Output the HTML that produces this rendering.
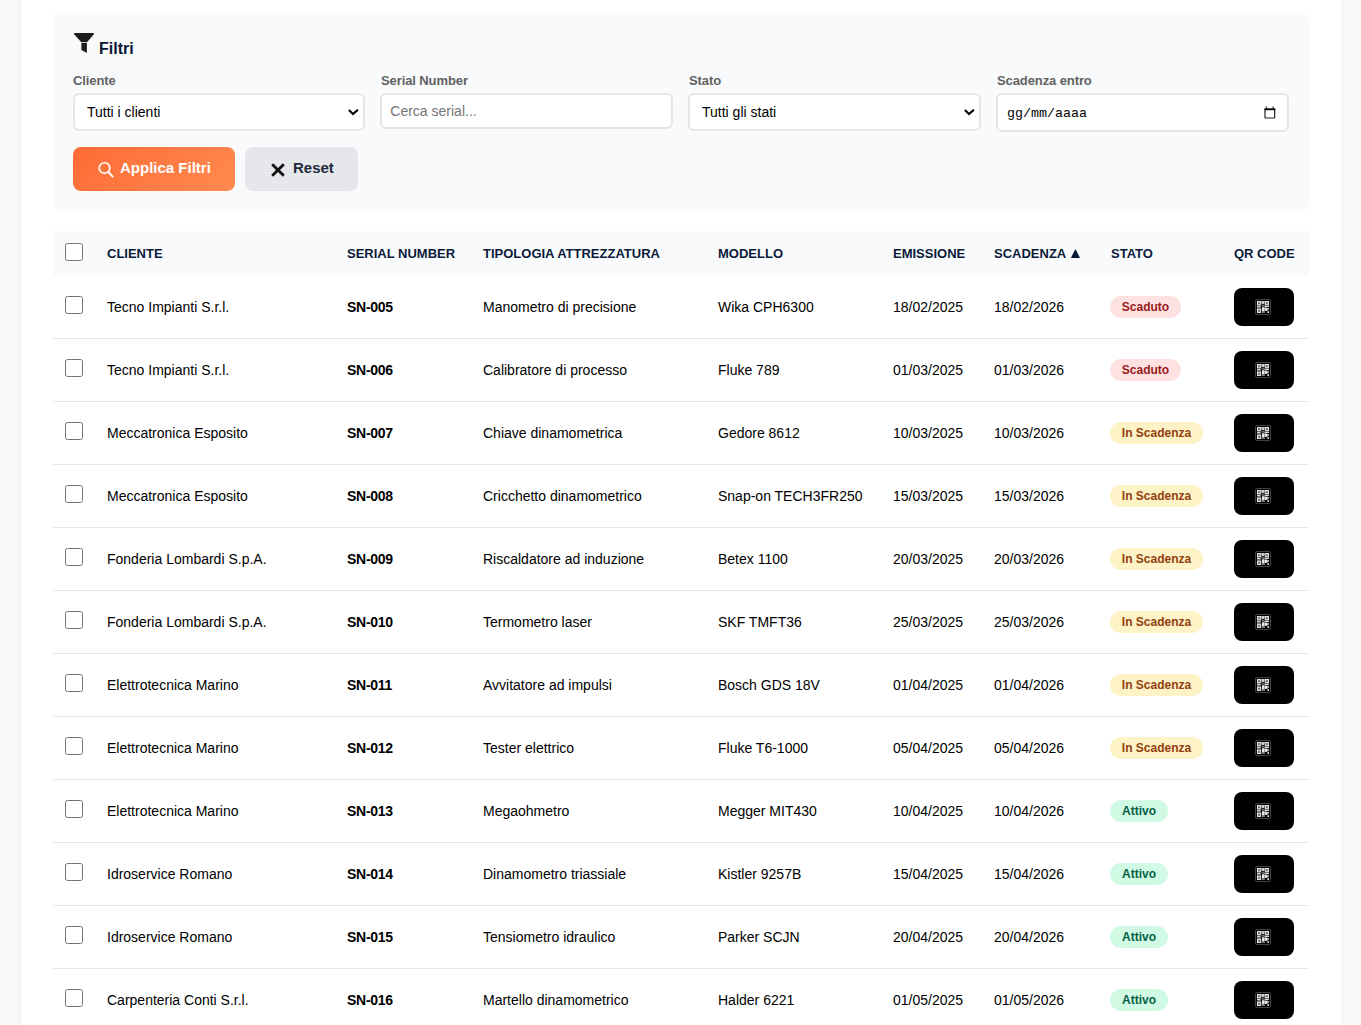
<!DOCTYPE html>
<html><head><meta charset="utf-8">
<style>
*{box-sizing:border-box;margin:0;padding:0}
html,body{width:1361px;height:1025px;overflow:hidden}
body{background:#f8fafc;font-family:"Liberation Sans",sans-serif;color:#111;position:relative}
.wrap{position:absolute;left:21px;top:-20px;width:1320px;height:1100px;background:#fff;box-shadow:0 0 6px rgba(0,0,0,0.06)}
.panel{position:absolute;left:53px;top:12px;width:1256px;height:199px;background:#f8fafc;border-radius:8px}
.ic{position:absolute;display:block}
.title{position:absolute;left:99px;top:41px;font-size:16px;font-weight:700;color:#0b1533;line-height:16px;white-space:nowrap}
.lbl{position:absolute;top:73px;font-size:13px;font-weight:700;color:#626262;letter-spacing:-0.1px;line-height:16px;white-space:nowrap}
.ctl{position:absolute;top:93px;height:38px;width:292.75px;background:#fff;border:2px solid #e3e5e9;border-radius:6px;font-size:14px;line-height:16px;color:#000}
.ctl span{position:absolute;left:12px;top:9px;white-space:nowrap}
.btn{position:absolute;top:147px;height:44px;border-radius:8px}
.orange{left:73px;width:162px;background:linear-gradient(135deg,#ff6b35,#ff8a50)}
.gray{left:245px;width:113px;background:#e5e7eb}
.btn span{position:absolute;top:12px;font-size:15px;font-weight:700;line-height:17px;white-space:nowrap}
.thead{position:absolute;left:53px;top:231px;width:1256px;height:45px;background:#f8fafc}
.th{position:absolute;top:246px;font-size:13px;font-weight:700;color:#0b1a3a;line-height:15px;white-space:nowrap}
.cb{position:absolute;left:65px;width:18px;height:18px;border:1.5px solid #767676;border-radius:2.5px;background:#fff}
.row{position:absolute;left:53px;width:1256px;height:1px;background:#e5e7eb}
.td{position:absolute;font-size:14px;line-height:16px;color:#000;white-space:nowrap}
.b{font-weight:700;letter-spacing:-0.27px}
.badge{position:absolute;height:22px;border-radius:11px;font-size:12px;font-weight:700;line-height:22px;text-align:center;white-space:nowrap}
.red{background:#fee2e2;color:#991b1b}
.yel{background:#fef3c7;color:#92400e}
.grn{background:#d1fae5;color:#065f46}
.qr{position:absolute;left:1234px;width:60px;height:38px;background:#000;border-radius:8px}
.qr svg{position:absolute;left:21px;top:11px}
</style></head><body>
<div class="wrap"></div>
<div class="panel"></div>
<svg class="ic" style="left:72px;top:31px" width="24" height="24" viewBox="72 31 24 24">
<path d="M74.8 33 H93.2 Q94.4 33.2 93.8 34.3 L87 42.2 H81.3 L74.2 34.3 Q73.6 33.2 74.8 33Z" fill="#1c1c1c"/>
<path d="M81.4 43.1 H86.9 V53 L81.4 50Z" fill="#1c1c1c"/>
</svg>
<div class="title">Filtri</div>
<div class="lbl" style="left:73px">Cliente</div>
<div class="lbl" style="left:381px">Serial Number</div>
<div class="lbl" style="left:689px">Stato</div>
<div class="lbl" style="left:997px">Scadenza entro</div>
<div class="ctl" style="left:73px;width:292px"><span>Tutti i clienti</span></div>
<div class="ctl" style="left:380px;width:293px;height:35.5px"><span style="color:#757575;left:8.3px;top:7.5px">Cerca serial...</span></div>
<div class="ctl" style="left:688px;width:293px"><span>Tutti gli stati</span></div>
<div class="ctl" style="left:996px;width:293px;height:38.67px"><span style="font-family:'Liberation Mono',monospace;font-size:13.33px;left:9px;top:10.5px">gg/mm/aaaa</span></div>
<svg class="ic" style="left:340px;top:100px" width="30" height="24" viewBox="340 100 30 24"><path d="M348.9 110.1 L353 114 L357.9 109.8" fill="none" stroke="#000" stroke-width="2.1"/></svg>
<svg class="ic" style="left:956px;top:100px" width="30" height="24" viewBox="956 100 30 24"><path d="M964.9 110.1 L969 114 L973.9 109.8" fill="none" stroke="#000" stroke-width="2.1"/></svg>
<svg class="ic" style="left:1258px;top:102px" width="24" height="22" viewBox="1258 102 24 22">
<path d="M1264.3 108.3 H1275.4 V110.2 H1264.3Z" fill="#000"/>
<path d="M1265 110 V117.6 Q1265 118 1265.5 118 H1274.2 Q1274.7 118 1274.7 117.5 V110" fill="none" stroke="#222" stroke-width="1.2"/>
<path d="M1266.3 106.5 V108.5 M1273.1 106.5 V108.5" stroke="#000" stroke-width="1"/>
</svg>
<div class="btn orange"><span style="left:47px;color:#fff">Applica Filtri</span></div>
<svg class="ic" style="left:94px;top:158px" width="24" height="24" viewBox="94 158 24 24"><circle cx="104.5" cy="168" r="5.3" fill="none" stroke="#fff" stroke-width="1.65"/><path d="M108.5 172 L112.6 176.6" stroke="#fff" stroke-width="2" stroke-linecap="round"/></svg>
<div class="btn gray"><span style="left:48px;color:#1e293b">Reset</span></div>
<svg class="ic" style="left:266px;top:158px" width="24" height="24" viewBox="266 158 24 24"><path d="M272.2 164.2 L283.8 175.8 M283.8 164.2 L272.2 175.8" stroke="#111" stroke-width="2.8"/></svg>
<div class="thead"></div>
<div class="cb" style="top:243px"></div>
<div class="th" style="left:107px">CLIENTE</div>
<div class="th" style="left:347px">SERIAL NUMBER</div>
<div class="th" style="left:483px">TIPOLOGIA ATTREZZATURA</div>
<div class="th" style="left:718px">MODELLO</div>
<div class="th" style="left:893px">EMISSIONE</div>
<div class="th" style="left:994px">SCADENZA</div>
<div class="th" style="left:1111px">STATO</div>
<div class="th" style="left:1234px">QR CODE</div>
<svg class="ic" style="left:1070px;top:248px" width="11" height="11" viewBox="1070 248 11 11"><path d="M1070.9 257.9 L1075.45 248.9 L1080 257.9Z" fill="#0b1a3a"/></svg>
<div class="cb" style="top:296px"></div>
<div class="td" style="left:107px;top:299px">Tecno Impianti S.r.l.</div>
<div class="td b" style="left:347px;top:299px">SN-005</div>
<div class="td" style="left:483px;top:299px">Manometro di precisione</div>
<div class="td" style="left:718px;top:299px">Wika CPH6300</div>
<div class="td" style="left:893px;top:299px">18/02/2025</div>
<div class="td" style="left:994px;top:299px">18/02/2026</div>
<div class="badge red" style="left:1110px;top:296px;width:71px">Scaduto</div>
<div class="qr" style="top:288px"><svg width="16" height="16" viewBox="0 0 16 16"><rect x="0.5" y="0.5" width="15" height="15" rx="1.5" fill="none" stroke="#404040" stroke-width="1"/><rect x="2.5" y="2.5" width="3.2" height="3.2" fill="#7a7a7a" stroke="#e2e2e2" stroke-width="1.05"/><rect x="10.3" y="2.5" width="3.2" height="3.2" fill="#7a7a7a" stroke="#e2e2e2" stroke-width="1.05"/><rect x="2.5" y="10.3" width="3.2" height="3.2" fill="#7a7a7a" stroke="#e2e2e2" stroke-width="1.05"/><path d="M6.4 2 H9.6 V4.2 L8 5.6 L6.4 4.2Z" fill="#cfcfcf"/><rect x="2" y="6.6" width="3.6" height="1.6" fill="#d6d6d6"/><rect x="6.6" y="6.4" width="2.8" height="1" fill="#bbb"/><rect x="9.6" y="6.6" width="4.4" height="1.4" fill="#d6d6d6"/><rect x="2" y="8.4" width="4" height="1.4" fill="#9a9a9a"/><rect x="7" y="8.2" width="2.6" height="4.4" fill="#e6e6e6"/><rect x="9.8" y="8.6" width="2.8" height="3.2" fill="#f0f0f0"/><rect x="12.4" y="12.2" width="1.6" height="1.8" fill="#e0e0e0"/><rect x="7" y="12.8" width="3" height="1.2" fill="#777"/><rect x="12.6" y="9" width="1.4" height="2" fill="#aaa"/></svg></div>
<div class="row" style="top:338px"></div>
<div class="cb" style="top:359px"></div>
<div class="td" style="left:107px;top:362px">Tecno Impianti S.r.l.</div>
<div class="td b" style="left:347px;top:362px">SN-006</div>
<div class="td" style="left:483px;top:362px">Calibratore di processo</div>
<div class="td" style="left:718px;top:362px">Fluke 789</div>
<div class="td" style="left:893px;top:362px">01/03/2025</div>
<div class="td" style="left:994px;top:362px">01/03/2026</div>
<div class="badge red" style="left:1110px;top:359px;width:71px">Scaduto</div>
<div class="qr" style="top:351px"><svg width="16" height="16" viewBox="0 0 16 16"><rect x="0.5" y="0.5" width="15" height="15" rx="1.5" fill="none" stroke="#404040" stroke-width="1"/><rect x="2.5" y="2.5" width="3.2" height="3.2" fill="#7a7a7a" stroke="#e2e2e2" stroke-width="1.05"/><rect x="10.3" y="2.5" width="3.2" height="3.2" fill="#7a7a7a" stroke="#e2e2e2" stroke-width="1.05"/><rect x="2.5" y="10.3" width="3.2" height="3.2" fill="#7a7a7a" stroke="#e2e2e2" stroke-width="1.05"/><path d="M6.4 2 H9.6 V4.2 L8 5.6 L6.4 4.2Z" fill="#cfcfcf"/><rect x="2" y="6.6" width="3.6" height="1.6" fill="#d6d6d6"/><rect x="6.6" y="6.4" width="2.8" height="1" fill="#bbb"/><rect x="9.6" y="6.6" width="4.4" height="1.4" fill="#d6d6d6"/><rect x="2" y="8.4" width="4" height="1.4" fill="#9a9a9a"/><rect x="7" y="8.2" width="2.6" height="4.4" fill="#e6e6e6"/><rect x="9.8" y="8.6" width="2.8" height="3.2" fill="#f0f0f0"/><rect x="12.4" y="12.2" width="1.6" height="1.8" fill="#e0e0e0"/><rect x="7" y="12.8" width="3" height="1.2" fill="#777"/><rect x="12.6" y="9" width="1.4" height="2" fill="#aaa"/></svg></div>
<div class="row" style="top:401px"></div>
<div class="cb" style="top:422px"></div>
<div class="td" style="left:107px;top:425px">Meccatronica Esposito</div>
<div class="td b" style="left:347px;top:425px">SN-007</div>
<div class="td" style="left:483px;top:425px">Chiave dinamometrica</div>
<div class="td" style="left:718px;top:425px">Gedore 8612</div>
<div class="td" style="left:893px;top:425px">10/03/2025</div>
<div class="td" style="left:994px;top:425px">10/03/2026</div>
<div class="badge yel" style="left:1110px;top:422px;width:93px">In Scadenza</div>
<div class="qr" style="top:414px"><svg width="16" height="16" viewBox="0 0 16 16"><rect x="0.5" y="0.5" width="15" height="15" rx="1.5" fill="none" stroke="#404040" stroke-width="1"/><rect x="2.5" y="2.5" width="3.2" height="3.2" fill="#7a7a7a" stroke="#e2e2e2" stroke-width="1.05"/><rect x="10.3" y="2.5" width="3.2" height="3.2" fill="#7a7a7a" stroke="#e2e2e2" stroke-width="1.05"/><rect x="2.5" y="10.3" width="3.2" height="3.2" fill="#7a7a7a" stroke="#e2e2e2" stroke-width="1.05"/><path d="M6.4 2 H9.6 V4.2 L8 5.6 L6.4 4.2Z" fill="#cfcfcf"/><rect x="2" y="6.6" width="3.6" height="1.6" fill="#d6d6d6"/><rect x="6.6" y="6.4" width="2.8" height="1" fill="#bbb"/><rect x="9.6" y="6.6" width="4.4" height="1.4" fill="#d6d6d6"/><rect x="2" y="8.4" width="4" height="1.4" fill="#9a9a9a"/><rect x="7" y="8.2" width="2.6" height="4.4" fill="#e6e6e6"/><rect x="9.8" y="8.6" width="2.8" height="3.2" fill="#f0f0f0"/><rect x="12.4" y="12.2" width="1.6" height="1.8" fill="#e0e0e0"/><rect x="7" y="12.8" width="3" height="1.2" fill="#777"/><rect x="12.6" y="9" width="1.4" height="2" fill="#aaa"/></svg></div>
<div class="row" style="top:464px"></div>
<div class="cb" style="top:485px"></div>
<div class="td" style="left:107px;top:488px">Meccatronica Esposito</div>
<div class="td b" style="left:347px;top:488px">SN-008</div>
<div class="td" style="left:483px;top:488px">Cricchetto dinamometrico</div>
<div class="td" style="left:718px;top:488px">Snap-on TECH3FR250</div>
<div class="td" style="left:893px;top:488px">15/03/2025</div>
<div class="td" style="left:994px;top:488px">15/03/2026</div>
<div class="badge yel" style="left:1110px;top:485px;width:93px">In Scadenza</div>
<div class="qr" style="top:477px"><svg width="16" height="16" viewBox="0 0 16 16"><rect x="0.5" y="0.5" width="15" height="15" rx="1.5" fill="none" stroke="#404040" stroke-width="1"/><rect x="2.5" y="2.5" width="3.2" height="3.2" fill="#7a7a7a" stroke="#e2e2e2" stroke-width="1.05"/><rect x="10.3" y="2.5" width="3.2" height="3.2" fill="#7a7a7a" stroke="#e2e2e2" stroke-width="1.05"/><rect x="2.5" y="10.3" width="3.2" height="3.2" fill="#7a7a7a" stroke="#e2e2e2" stroke-width="1.05"/><path d="M6.4 2 H9.6 V4.2 L8 5.6 L6.4 4.2Z" fill="#cfcfcf"/><rect x="2" y="6.6" width="3.6" height="1.6" fill="#d6d6d6"/><rect x="6.6" y="6.4" width="2.8" height="1" fill="#bbb"/><rect x="9.6" y="6.6" width="4.4" height="1.4" fill="#d6d6d6"/><rect x="2" y="8.4" width="4" height="1.4" fill="#9a9a9a"/><rect x="7" y="8.2" width="2.6" height="4.4" fill="#e6e6e6"/><rect x="9.8" y="8.6" width="2.8" height="3.2" fill="#f0f0f0"/><rect x="12.4" y="12.2" width="1.6" height="1.8" fill="#e0e0e0"/><rect x="7" y="12.8" width="3" height="1.2" fill="#777"/><rect x="12.6" y="9" width="1.4" height="2" fill="#aaa"/></svg></div>
<div class="row" style="top:527px"></div>
<div class="cb" style="top:548px"></div>
<div class="td" style="left:107px;top:551px">Fonderia Lombardi S.p.A.</div>
<div class="td b" style="left:347px;top:551px">SN-009</div>
<div class="td" style="left:483px;top:551px">Riscaldatore ad induzione</div>
<div class="td" style="left:718px;top:551px">Betex 1100</div>
<div class="td" style="left:893px;top:551px">20/03/2025</div>
<div class="td" style="left:994px;top:551px">20/03/2026</div>
<div class="badge yel" style="left:1110px;top:548px;width:93px">In Scadenza</div>
<div class="qr" style="top:540px"><svg width="16" height="16" viewBox="0 0 16 16"><rect x="0.5" y="0.5" width="15" height="15" rx="1.5" fill="none" stroke="#404040" stroke-width="1"/><rect x="2.5" y="2.5" width="3.2" height="3.2" fill="#7a7a7a" stroke="#e2e2e2" stroke-width="1.05"/><rect x="10.3" y="2.5" width="3.2" height="3.2" fill="#7a7a7a" stroke="#e2e2e2" stroke-width="1.05"/><rect x="2.5" y="10.3" width="3.2" height="3.2" fill="#7a7a7a" stroke="#e2e2e2" stroke-width="1.05"/><path d="M6.4 2 H9.6 V4.2 L8 5.6 L6.4 4.2Z" fill="#cfcfcf"/><rect x="2" y="6.6" width="3.6" height="1.6" fill="#d6d6d6"/><rect x="6.6" y="6.4" width="2.8" height="1" fill="#bbb"/><rect x="9.6" y="6.6" width="4.4" height="1.4" fill="#d6d6d6"/><rect x="2" y="8.4" width="4" height="1.4" fill="#9a9a9a"/><rect x="7" y="8.2" width="2.6" height="4.4" fill="#e6e6e6"/><rect x="9.8" y="8.6" width="2.8" height="3.2" fill="#f0f0f0"/><rect x="12.4" y="12.2" width="1.6" height="1.8" fill="#e0e0e0"/><rect x="7" y="12.8" width="3" height="1.2" fill="#777"/><rect x="12.6" y="9" width="1.4" height="2" fill="#aaa"/></svg></div>
<div class="row" style="top:590px"></div>
<div class="cb" style="top:611px"></div>
<div class="td" style="left:107px;top:614px">Fonderia Lombardi S.p.A.</div>
<div class="td b" style="left:347px;top:614px">SN-010</div>
<div class="td" style="left:483px;top:614px">Termometro laser</div>
<div class="td" style="left:718px;top:614px">SKF TMFT36</div>
<div class="td" style="left:893px;top:614px">25/03/2025</div>
<div class="td" style="left:994px;top:614px">25/03/2026</div>
<div class="badge yel" style="left:1110px;top:611px;width:93px">In Scadenza</div>
<div class="qr" style="top:603px"><svg width="16" height="16" viewBox="0 0 16 16"><rect x="0.5" y="0.5" width="15" height="15" rx="1.5" fill="none" stroke="#404040" stroke-width="1"/><rect x="2.5" y="2.5" width="3.2" height="3.2" fill="#7a7a7a" stroke="#e2e2e2" stroke-width="1.05"/><rect x="10.3" y="2.5" width="3.2" height="3.2" fill="#7a7a7a" stroke="#e2e2e2" stroke-width="1.05"/><rect x="2.5" y="10.3" width="3.2" height="3.2" fill="#7a7a7a" stroke="#e2e2e2" stroke-width="1.05"/><path d="M6.4 2 H9.6 V4.2 L8 5.6 L6.4 4.2Z" fill="#cfcfcf"/><rect x="2" y="6.6" width="3.6" height="1.6" fill="#d6d6d6"/><rect x="6.6" y="6.4" width="2.8" height="1" fill="#bbb"/><rect x="9.6" y="6.6" width="4.4" height="1.4" fill="#d6d6d6"/><rect x="2" y="8.4" width="4" height="1.4" fill="#9a9a9a"/><rect x="7" y="8.2" width="2.6" height="4.4" fill="#e6e6e6"/><rect x="9.8" y="8.6" width="2.8" height="3.2" fill="#f0f0f0"/><rect x="12.4" y="12.2" width="1.6" height="1.8" fill="#e0e0e0"/><rect x="7" y="12.8" width="3" height="1.2" fill="#777"/><rect x="12.6" y="9" width="1.4" height="2" fill="#aaa"/></svg></div>
<div class="row" style="top:653px"></div>
<div class="cb" style="top:674px"></div>
<div class="td" style="left:107px;top:677px">Elettrotecnica Marino</div>
<div class="td b" style="left:347px;top:677px">SN-011</div>
<div class="td" style="left:483px;top:677px">Avvitatore ad impulsi</div>
<div class="td" style="left:718px;top:677px">Bosch GDS 18V</div>
<div class="td" style="left:893px;top:677px">01/04/2025</div>
<div class="td" style="left:994px;top:677px">01/04/2026</div>
<div class="badge yel" style="left:1110px;top:674px;width:93px">In Scadenza</div>
<div class="qr" style="top:666px"><svg width="16" height="16" viewBox="0 0 16 16"><rect x="0.5" y="0.5" width="15" height="15" rx="1.5" fill="none" stroke="#404040" stroke-width="1"/><rect x="2.5" y="2.5" width="3.2" height="3.2" fill="#7a7a7a" stroke="#e2e2e2" stroke-width="1.05"/><rect x="10.3" y="2.5" width="3.2" height="3.2" fill="#7a7a7a" stroke="#e2e2e2" stroke-width="1.05"/><rect x="2.5" y="10.3" width="3.2" height="3.2" fill="#7a7a7a" stroke="#e2e2e2" stroke-width="1.05"/><path d="M6.4 2 H9.6 V4.2 L8 5.6 L6.4 4.2Z" fill="#cfcfcf"/><rect x="2" y="6.6" width="3.6" height="1.6" fill="#d6d6d6"/><rect x="6.6" y="6.4" width="2.8" height="1" fill="#bbb"/><rect x="9.6" y="6.6" width="4.4" height="1.4" fill="#d6d6d6"/><rect x="2" y="8.4" width="4" height="1.4" fill="#9a9a9a"/><rect x="7" y="8.2" width="2.6" height="4.4" fill="#e6e6e6"/><rect x="9.8" y="8.6" width="2.8" height="3.2" fill="#f0f0f0"/><rect x="12.4" y="12.2" width="1.6" height="1.8" fill="#e0e0e0"/><rect x="7" y="12.8" width="3" height="1.2" fill="#777"/><rect x="12.6" y="9" width="1.4" height="2" fill="#aaa"/></svg></div>
<div class="row" style="top:716px"></div>
<div class="cb" style="top:737px"></div>
<div class="td" style="left:107px;top:740px">Elettrotecnica Marino</div>
<div class="td b" style="left:347px;top:740px">SN-012</div>
<div class="td" style="left:483px;top:740px">Tester elettrico</div>
<div class="td" style="left:718px;top:740px">Fluke T6-1000</div>
<div class="td" style="left:893px;top:740px">05/04/2025</div>
<div class="td" style="left:994px;top:740px">05/04/2026</div>
<div class="badge yel" style="left:1110px;top:737px;width:93px">In Scadenza</div>
<div class="qr" style="top:729px"><svg width="16" height="16" viewBox="0 0 16 16"><rect x="0.5" y="0.5" width="15" height="15" rx="1.5" fill="none" stroke="#404040" stroke-width="1"/><rect x="2.5" y="2.5" width="3.2" height="3.2" fill="#7a7a7a" stroke="#e2e2e2" stroke-width="1.05"/><rect x="10.3" y="2.5" width="3.2" height="3.2" fill="#7a7a7a" stroke="#e2e2e2" stroke-width="1.05"/><rect x="2.5" y="10.3" width="3.2" height="3.2" fill="#7a7a7a" stroke="#e2e2e2" stroke-width="1.05"/><path d="M6.4 2 H9.6 V4.2 L8 5.6 L6.4 4.2Z" fill="#cfcfcf"/><rect x="2" y="6.6" width="3.6" height="1.6" fill="#d6d6d6"/><rect x="6.6" y="6.4" width="2.8" height="1" fill="#bbb"/><rect x="9.6" y="6.6" width="4.4" height="1.4" fill="#d6d6d6"/><rect x="2" y="8.4" width="4" height="1.4" fill="#9a9a9a"/><rect x="7" y="8.2" width="2.6" height="4.4" fill="#e6e6e6"/><rect x="9.8" y="8.6" width="2.8" height="3.2" fill="#f0f0f0"/><rect x="12.4" y="12.2" width="1.6" height="1.8" fill="#e0e0e0"/><rect x="7" y="12.8" width="3" height="1.2" fill="#777"/><rect x="12.6" y="9" width="1.4" height="2" fill="#aaa"/></svg></div>
<div class="row" style="top:779px"></div>
<div class="cb" style="top:800px"></div>
<div class="td" style="left:107px;top:803px">Elettrotecnica Marino</div>
<div class="td b" style="left:347px;top:803px">SN-013</div>
<div class="td" style="left:483px;top:803px">Megaohmetro</div>
<div class="td" style="left:718px;top:803px">Megger MIT430</div>
<div class="td" style="left:893px;top:803px">10/04/2025</div>
<div class="td" style="left:994px;top:803px">10/04/2026</div>
<div class="badge grn" style="left:1110px;top:800px;width:58px">Attivo</div>
<div class="qr" style="top:792px"><svg width="16" height="16" viewBox="0 0 16 16"><rect x="0.5" y="0.5" width="15" height="15" rx="1.5" fill="none" stroke="#404040" stroke-width="1"/><rect x="2.5" y="2.5" width="3.2" height="3.2" fill="#7a7a7a" stroke="#e2e2e2" stroke-width="1.05"/><rect x="10.3" y="2.5" width="3.2" height="3.2" fill="#7a7a7a" stroke="#e2e2e2" stroke-width="1.05"/><rect x="2.5" y="10.3" width="3.2" height="3.2" fill="#7a7a7a" stroke="#e2e2e2" stroke-width="1.05"/><path d="M6.4 2 H9.6 V4.2 L8 5.6 L6.4 4.2Z" fill="#cfcfcf"/><rect x="2" y="6.6" width="3.6" height="1.6" fill="#d6d6d6"/><rect x="6.6" y="6.4" width="2.8" height="1" fill="#bbb"/><rect x="9.6" y="6.6" width="4.4" height="1.4" fill="#d6d6d6"/><rect x="2" y="8.4" width="4" height="1.4" fill="#9a9a9a"/><rect x="7" y="8.2" width="2.6" height="4.4" fill="#e6e6e6"/><rect x="9.8" y="8.6" width="2.8" height="3.2" fill="#f0f0f0"/><rect x="12.4" y="12.2" width="1.6" height="1.8" fill="#e0e0e0"/><rect x="7" y="12.8" width="3" height="1.2" fill="#777"/><rect x="12.6" y="9" width="1.4" height="2" fill="#aaa"/></svg></div>
<div class="row" style="top:842px"></div>
<div class="cb" style="top:863px"></div>
<div class="td" style="left:107px;top:866px">Idroservice Romano</div>
<div class="td b" style="left:347px;top:866px">SN-014</div>
<div class="td" style="left:483px;top:866px">Dinamometro triassiale</div>
<div class="td" style="left:718px;top:866px">Kistler 9257B</div>
<div class="td" style="left:893px;top:866px">15/04/2025</div>
<div class="td" style="left:994px;top:866px">15/04/2026</div>
<div class="badge grn" style="left:1110px;top:863px;width:58px">Attivo</div>
<div class="qr" style="top:855px"><svg width="16" height="16" viewBox="0 0 16 16"><rect x="0.5" y="0.5" width="15" height="15" rx="1.5" fill="none" stroke="#404040" stroke-width="1"/><rect x="2.5" y="2.5" width="3.2" height="3.2" fill="#7a7a7a" stroke="#e2e2e2" stroke-width="1.05"/><rect x="10.3" y="2.5" width="3.2" height="3.2" fill="#7a7a7a" stroke="#e2e2e2" stroke-width="1.05"/><rect x="2.5" y="10.3" width="3.2" height="3.2" fill="#7a7a7a" stroke="#e2e2e2" stroke-width="1.05"/><path d="M6.4 2 H9.6 V4.2 L8 5.6 L6.4 4.2Z" fill="#cfcfcf"/><rect x="2" y="6.6" width="3.6" height="1.6" fill="#d6d6d6"/><rect x="6.6" y="6.4" width="2.8" height="1" fill="#bbb"/><rect x="9.6" y="6.6" width="4.4" height="1.4" fill="#d6d6d6"/><rect x="2" y="8.4" width="4" height="1.4" fill="#9a9a9a"/><rect x="7" y="8.2" width="2.6" height="4.4" fill="#e6e6e6"/><rect x="9.8" y="8.6" width="2.8" height="3.2" fill="#f0f0f0"/><rect x="12.4" y="12.2" width="1.6" height="1.8" fill="#e0e0e0"/><rect x="7" y="12.8" width="3" height="1.2" fill="#777"/><rect x="12.6" y="9" width="1.4" height="2" fill="#aaa"/></svg></div>
<div class="row" style="top:905px"></div>
<div class="cb" style="top:926px"></div>
<div class="td" style="left:107px;top:929px">Idroservice Romano</div>
<div class="td b" style="left:347px;top:929px">SN-015</div>
<div class="td" style="left:483px;top:929px">Tensiometro idraulico</div>
<div class="td" style="left:718px;top:929px">Parker SCJN</div>
<div class="td" style="left:893px;top:929px">20/04/2025</div>
<div class="td" style="left:994px;top:929px">20/04/2026</div>
<div class="badge grn" style="left:1110px;top:926px;width:58px">Attivo</div>
<div class="qr" style="top:918px"><svg width="16" height="16" viewBox="0 0 16 16"><rect x="0.5" y="0.5" width="15" height="15" rx="1.5" fill="none" stroke="#404040" stroke-width="1"/><rect x="2.5" y="2.5" width="3.2" height="3.2" fill="#7a7a7a" stroke="#e2e2e2" stroke-width="1.05"/><rect x="10.3" y="2.5" width="3.2" height="3.2" fill="#7a7a7a" stroke="#e2e2e2" stroke-width="1.05"/><rect x="2.5" y="10.3" width="3.2" height="3.2" fill="#7a7a7a" stroke="#e2e2e2" stroke-width="1.05"/><path d="M6.4 2 H9.6 V4.2 L8 5.6 L6.4 4.2Z" fill="#cfcfcf"/><rect x="2" y="6.6" width="3.6" height="1.6" fill="#d6d6d6"/><rect x="6.6" y="6.4" width="2.8" height="1" fill="#bbb"/><rect x="9.6" y="6.6" width="4.4" height="1.4" fill="#d6d6d6"/><rect x="2" y="8.4" width="4" height="1.4" fill="#9a9a9a"/><rect x="7" y="8.2" width="2.6" height="4.4" fill="#e6e6e6"/><rect x="9.8" y="8.6" width="2.8" height="3.2" fill="#f0f0f0"/><rect x="12.4" y="12.2" width="1.6" height="1.8" fill="#e0e0e0"/><rect x="7" y="12.8" width="3" height="1.2" fill="#777"/><rect x="12.6" y="9" width="1.4" height="2" fill="#aaa"/></svg></div>
<div class="row" style="top:968px"></div>
<div class="cb" style="top:989px"></div>
<div class="td" style="left:107px;top:992px">Carpenteria Conti S.r.l.</div>
<div class="td b" style="left:347px;top:992px">SN-016</div>
<div class="td" style="left:483px;top:992px">Martello dinamometrico</div>
<div class="td" style="left:718px;top:992px">Halder 6221</div>
<div class="td" style="left:893px;top:992px">01/05/2025</div>
<div class="td" style="left:994px;top:992px">01/05/2026</div>
<div class="badge grn" style="left:1110px;top:989px;width:58px">Attivo</div>
<div class="qr" style="top:981px"><svg width="16" height="16" viewBox="0 0 16 16"><rect x="0.5" y="0.5" width="15" height="15" rx="1.5" fill="none" stroke="#404040" stroke-width="1"/><rect x="2.5" y="2.5" width="3.2" height="3.2" fill="#7a7a7a" stroke="#e2e2e2" stroke-width="1.05"/><rect x="10.3" y="2.5" width="3.2" height="3.2" fill="#7a7a7a" stroke="#e2e2e2" stroke-width="1.05"/><rect x="2.5" y="10.3" width="3.2" height="3.2" fill="#7a7a7a" stroke="#e2e2e2" stroke-width="1.05"/><path d="M6.4 2 H9.6 V4.2 L8 5.6 L6.4 4.2Z" fill="#cfcfcf"/><rect x="2" y="6.6" width="3.6" height="1.6" fill="#d6d6d6"/><rect x="6.6" y="6.4" width="2.8" height="1" fill="#bbb"/><rect x="9.6" y="6.6" width="4.4" height="1.4" fill="#d6d6d6"/><rect x="2" y="8.4" width="4" height="1.4" fill="#9a9a9a"/><rect x="7" y="8.2" width="2.6" height="4.4" fill="#e6e6e6"/><rect x="9.8" y="8.6" width="2.8" height="3.2" fill="#f0f0f0"/><rect x="12.4" y="12.2" width="1.6" height="1.8" fill="#e0e0e0"/><rect x="7" y="12.8" width="3" height="1.2" fill="#777"/><rect x="12.6" y="9" width="1.4" height="2" fill="#aaa"/></svg></div>
<div class="row" style="top:1031px"></div>
</body></html>
